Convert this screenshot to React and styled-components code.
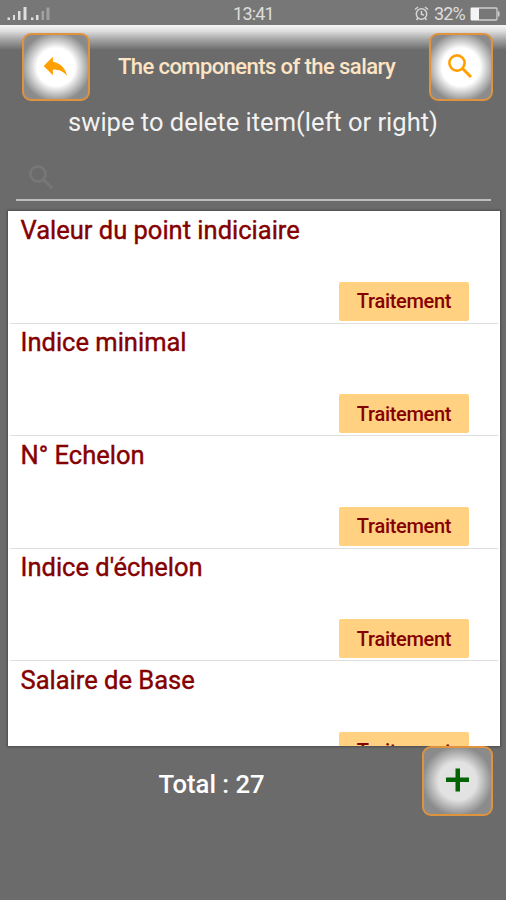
import styled, { createGlobalStyle } from "styled-components";

const GlobalStyle = createGlobalStyle`
  body {
    margin: 0;
    background-color: #6b6b6b;
    font-family: Roboto, "Liberation Sans", sans-serif;
  }

  * {
    box-sizing: border-box;
  }
`;

const Screen = styled.main`
  display: flex;
  flex-direction: column;
  width: 506px;
  height: 900px;
  overflow: hidden;
  background-color: #6b6b6b;
`;

const StatusBar = styled.div`
  display: grid;
  grid-template-columns: 1fr auto 1fr;
  align-items: center;
  height: 25px;
  padding: 2px 6px 0 7px;
  background-color: #777;
  color: #dedede;
  font-size: 18px;
  line-height: 22px;
  letter-spacing: -0.8px;
`;

const StatusIcons = styled.div`
  display: flex;
  align-items: center;
  justify-content: flex-end;
  gap: 5px;
`;

const Header = styled.header`
  display: flex;
  align-items: flex-start;
  justify-content: space-between;
  height: 80px;
  padding: 8px 13px 0 22px;
  background: linear-gradient(#f6f6f6 0, #dedede 6px, #a2a2a2 15px, #6b6b6b 25px);
`;

const IconButton = styled.button`
  display: flex;
  align-items: center;
  justify-content: center;
  flex: none;
  width: ${({ $width }) => $width}px;
  height: ${({ $height }) => $height || 68}px;
  padding: 0 2px 2px 0;
  border: 2px solid #e0933f;
  border-radius: 9px;
  background: ${({ $glow }) =>
    `radial-gradient(circle, ${$glow} 0, ${$glow} 19px, #8b8b8b 35px)`};
`;

const Title = styled.h1`
  margin: 0;
  padding: 20px 6px 0 0;
  color: #ffe4c4;
  font-size: 22px;
  font-weight: 500;
  line-height: 28px;
  letter-spacing: -0.57px;
`;

const Hint = styled.p`
  margin: 0;
  color: #f2f2f2;
  font-size: 25.5px;
  line-height: 34px;
  text-align: center;
`;

const SearchField = styled.div`
  display: flex;
  align-items: flex-end;
  height: 62px;
  margin: 0 15px 10px 16px;
  padding: 0 0 5px 8px;
  border-bottom: 2px solid #bdbdbd;
`;

const List = styled.ul`
  flex: none;
  height: 535px;
  margin: 0 6px 0 8px;
  padding: 0 2px;
  overflow: hidden;
  list-style: none;
  background-color: #fff;
  box-shadow: 0 0 2px 1px #4c4c4c;
`;

const Item = styled.li`
  display: flex;
  flex-direction: column;
  justify-content: space-between;
  height: 112.5px;
  padding: 2.5px 29px 2px 10.5px;
  border-bottom: 1px solid #dedede;
`;

const ItemName = styled.span`
  color: #850000;
  font-size: 25.5px;
  line-height: 32px;
  -webkit-text-stroke: 0.4px #850000;
`;

const ItemAction = styled.button`
  align-self: flex-end;
  width: 130px;
  height: 39px;
  padding: 0;
  border: none;
  border-radius: 2px;
  background-color: #ffd180;
  color: #850000;
  font: 500 20px Roboto, "Liberation Sans", sans-serif;
  letter-spacing: -0.3px;
`;

const Footer = styled.footer`
  display: flex;
  justify-content: space-between;
  height: 70px;
  padding: 0 13px 0 158.5px;
`;

const Total = styled.strong`
  padding-top: 21px;
  color: #fff;
  font-size: 25.7px;
  font-weight: 500;
  line-height: 34px;
`;

const items = [
  "Valeur du point indiciaire",
  "Indice minimal",
  "N° Echelon",
  "Indice d'échelon",
  "Salaire de Base",
];

const SearchIcon = ({ size, color }) => (
  <svg width={size} height={size} viewBox="0 0 34 34" fill="none" stroke={color}>
    <circle cx="14" cy="14" r="7.6" strokeWidth="2.6" />
    <path d="M19.5 19.5L28 28" strokeWidth="3" />
  </svg>
);

const ReplyIcon = () => (
  <svg width="34" height="34" viewBox="0 0 24 24" fill="#ffa000">
    <path d="M10.500 9V5.500L4 12l6.500 6.500v-4c4.500 0 7.500 1.400 10 4.500-1-4.500-3.700-9-10-10z" />
  </svg>
);

const PlusIcon = () => (
  <svg width="34" height="34" viewBox="0 0 34 34" fill="#006400">
    <path d="M15.500 5.500h4.500v9h9v4.500h-9v9.500h-4.500v-9.500h-9.500v-4.500h9.500z" />
  </svg>
);

const SignalIcon = () => (
  <svg width="44" height="16" viewBox="0 0 44 16">
    <g fill="#dedede">
      <path d="M.5 11.500h2.500V14H.500zM6 9h2v5H6zM11 5h2.500v9H11zM16.500 1h3v13h-3z" />
      <path d="M24 11.500h2.500V14H24zM29 9h2.500v5H29z" />
    </g>
    <path d="M34.500 5h2.500v9h-2.500zM39.500 1.500h3V14h-3z" fill="#a0a0a0" />
  </svg>
);

const AlarmIcon = () => (
  <svg width="15" height="15" viewBox="0 0 15 15" fill="none" stroke="#d6d6d6" strokeWidth="1.5">
    <circle cx="7.5" cy="8" r="5.2" />
    <path d="M7.5 5v3.5L10 9M1 3.5L4 1M14 3.5L11 1M4 12l-1.5 2M11 12l1.5 2" />
  </svg>
);

const BatteryIcon = () => (
  <svg width="30" height="14" viewBox="0 0 30 14">
    <rect x="1" y="1" width="26" height="12" rx="1" fill="none" stroke="#cfcfcf" strokeWidth="1.3" />
    <path d="M1 1h8v12H1z" fill="#f4f4f4" />
    <path d="M28 4.5h1.5v5H28z" fill="#cfcfcf" />
  </svg>
);

const App = () => {
  return (
    <>
      <GlobalStyle />
      <Screen>
        <StatusBar>
          <SignalIcon />
          <span>13:41</span>
          <StatusIcons>
            <AlarmIcon />
            <span>32%</span>
            <BatteryIcon />
          </StatusIcons>
        </StatusBar>
        <Header>
          <IconButton type="button" $width={68} $glow="#fff">
            <ReplyIcon />
          </IconButton>
          <Title>The components of the salary</Title>
          <IconButton type="button" $width={64} $glow="#fff">
            <SearchIcon size={34} color="#ffa000" />
          </IconButton>
        </Header>
        <Hint>swipe to delete item(left or right)</Hint>
        <SearchField>
          <SearchIcon size={34} color="#777" />
        </SearchField>
        <List>
          {items.map((name) => (
            <Item key={name}>
              <ItemName>{name}</ItemName>
              <ItemAction type="button">Traitement</ItemAction>
            </Item>
          ))}
        </List>
        <Footer>
          <Total>Total : 27</Total>
          <IconButton type="button" $width={71} $height={70} $glow="#e2e2e2">
            <PlusIcon />
          </IconButton>
        </Footer>
      </Screen>
    </>
  );
};

export default App;
